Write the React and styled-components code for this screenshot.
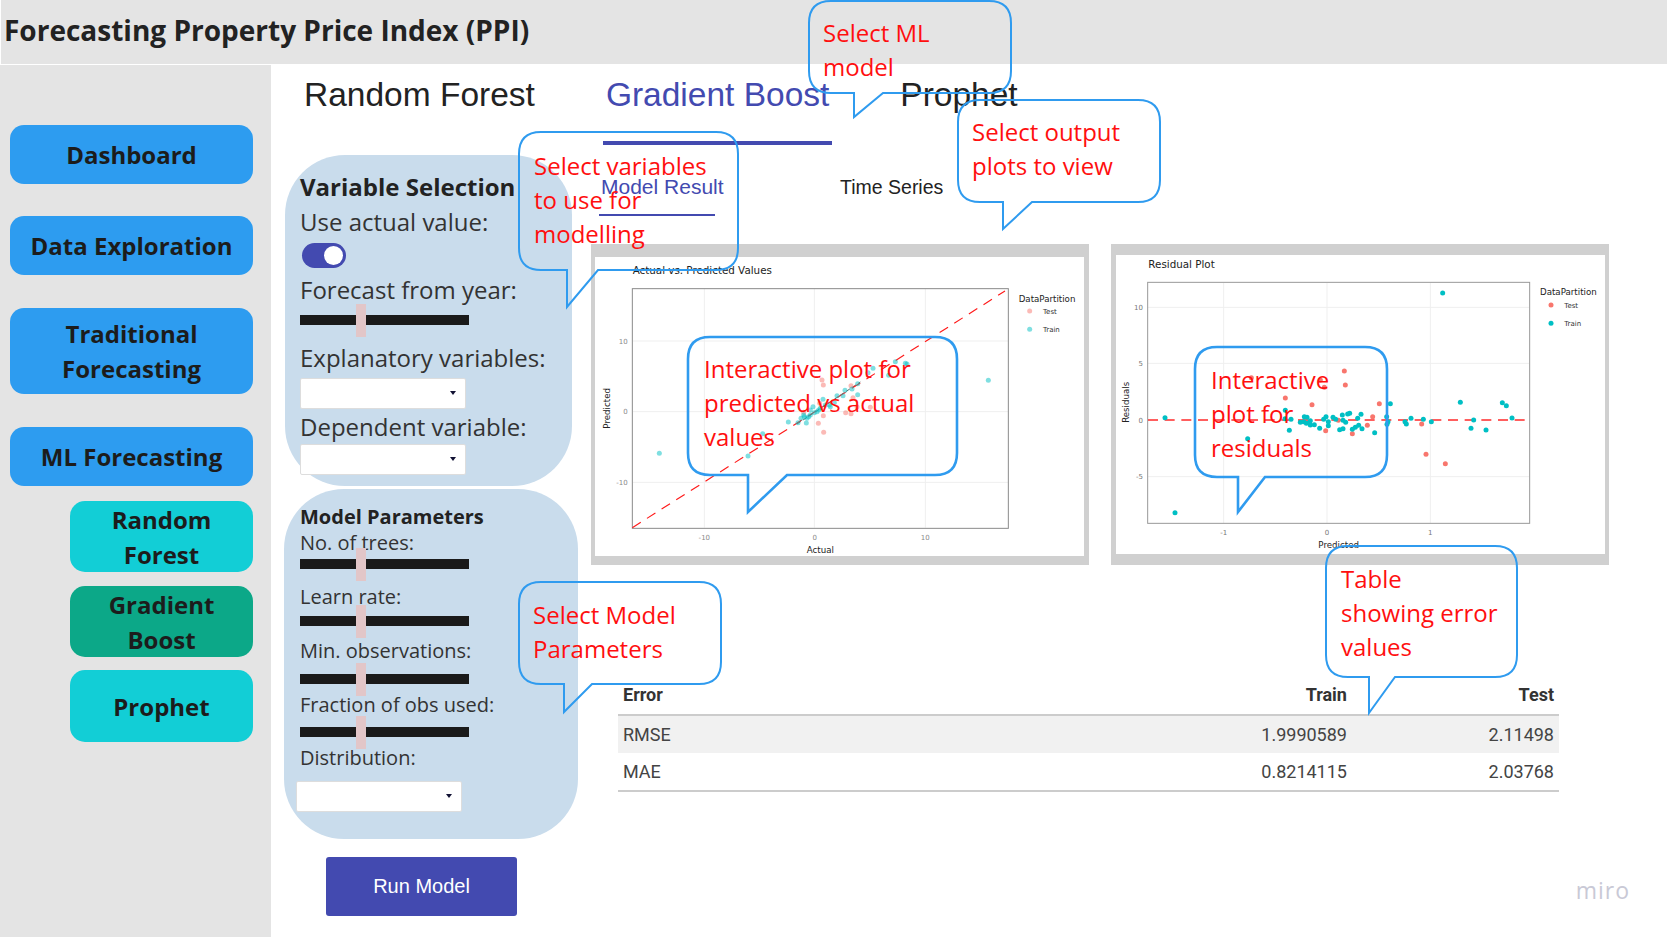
import React from "react";
import styled, { createGlobalStyle } from "styled-components";

const SANS = `"Open Sans", "Noto Sans", sans-serif`;
const ARIAL = `"Liberation Sans", Arial, sans-serif`;
const PLOT_FONT = `"DejaVu Sans", Verdana, sans-serif`;
const BLUE = "#434ab0";
const TEAL = "#00bfc4";
const SALMON = "#f8766d";

const bubbles = [
  { x: 809, y: 1, w: 202, h: 92, tailL: 45, tailR: 74, tipY: 116, textX: 14, textY: 15, lines: ["Select ML", "model"] },
  { x: 958, y: 100, w: 202, h: 102, tailL: 45, tailR: 74, tipY: 129, textX: 14, textY: 15, lines: ["Select output", "plots to view"] },
  { x: 519, y: 132, w: 219, h: 138, tailL: 48, tailR: 79, tipY: 175, textX: 15, textY: 17, lines: ["Select variables", "to use for", "modelling"] },
  { x: 519, y: 582, w: 202, h: 102, tailL: 45, tailR: 73, tipY: 130, textX: 14, textY: 16, lines: ["Select Model", "Parameters"] },
  { x: 688, y: 337, w: 269, h: 138, tailL: 60, tailR: 99, tipY: 175, textX: 16, textY: 15, thick: true, lines: ["Interactive plot for", "predicted vs actual", "values"] },
  { x: 1195, y: 347, w: 192, h: 130, tailL: 43, tailR: 70, tipY: 165, textX: 16, textY: 16, thick: true, lines: ["Interactive", "plot for", "residuals"] },
  { x: 1326, y: 546, w: 191, h: 131, tailL: 43, tailR: 69, tipY: 167, textX: 15, textY: 16, lines: ["Table", "showing error", "values"] },
];

const actualTrain = [
  [247, 670], [513, 678], [557, 611], [634, 576], [663, 578], [672, 565], [680, 555], [688, 579], [695, 560],
  [700, 540], [708, 530], [720, 545], [730, 535], [738, 508], [745, 525], [757, 525], [772, 518], [780, 497],
  [798, 497], [804, 481], [825, 477], [842, 461], [842, 494], [873, 428], [888, 415], [935, 436], [955, 395],
  [985, 400], [990, 402], [1234, 451], [682, 560], [690, 565], [700, 555], [712, 548], [725, 540], [760, 530],
];
const actualTest = [
  [740, 607], [724, 580], [739, 557], [680, 547], [806, 548], [822, 551], [840, 530], [880, 532], [828, 503],
  [822, 467], [739, 465], [735, 450], [728, 520],
];
const residualTrain = [
  [204, 563], [234, 848], [452, 626], [565, 541], [564, 566], [582, 568], [577, 601], [610, 577], [622, 560],
  [630, 562], [620, 575], [628, 580], [637, 578], [640, 585], [652, 584], [668, 595], [680, 568], [687, 560],
  [694, 575], [694, 587], [708, 562], [716, 568], [728, 599], [738, 596], [736, 555], [738, 571], [746, 577],
  [752, 552], [758, 550], [766, 598], [775, 592], [785, 586], [795, 596], [792, 553], [782, 565], [833, 608],
  [869, 560], [873, 575], [870, 583], [880, 521], [924, 575], [928, 582], [942, 565], [979, 568], [1003, 575],
  [1037, 189], [1090, 517], [1122, 595], [1130, 570], [1167, 600], [1216, 518], [1228, 527], [1245, 564], [640, 572],
];
const residualTest = [
  [742, 423], [670, 450], [682, 472], [745, 465], [565, 504], [645, 524], [463, 443], [847, 521], [827, 560],
  [811, 586], [766, 611], [686, 602], [724, 571], [974, 582], [987, 673], [1045, 701],
];

const bubblePath = ({ w, h, tailL, tailR, tipY }) => {
  const r = 22;
  return `M${r} 0H${w - r}Q${w} 0 ${w} ${r}V${h - r}Q${w} ${h} ${w - r} ${h}H${tailR}L${tailL} ${tipY}V${h}H${r}Q0 ${h} 0 ${h - r}V${r}Q0 0 ${r} 0Z`;
};

const Dots = ({ points, color, opacity }) =>
  points.map(([cx, cy]) => <circle key={`${cx}-${cy}`} cx={cx} cy={cy} r="7.5" fill={color} opacity={opacity} />);

const ActualPlot = () => (
  <PlotSvg width="489" height="299" viewBox="54 81 1467 897">
    <g stroke="#efefef" strokeWidth="3">
      <path d="M382 177V893M712 177V893M1045 177V893M167 333H1293M167 545H1293M167 757H1293" />
    </g>
    <rect x="166" y="176" width="1128" height="719" fill="none" stroke="#8a8a8a" strokeWidth="3" />
    <path d="M660 582L850 456" stroke="#666" strokeWidth="3" strokeDasharray="14 8" />
    <path d="M166 893L1284 183" stroke="#ff1a1a" strokeWidth="3.5" strokeDasharray="30 22" />
    <Dots points={actualTest} color={SALMON} opacity="0.5" />
    <Dots points={actualTrain} color={TEAL} opacity="0.5" />
    <g fill="#8a8a8a" fontSize="21" textAnchor="middle">
      <text x="382" y="931">-10</text>
      <text x="713" y="931">0</text>
      <text x="1045" y="931">10</text>
    </g>
    <g fill="#8a8a8a" fontSize="21" textAnchor="end">
      <text x="152" y="341">10</text>
      <text x="152" y="553">0</text>
      <text x="152" y="764">-10</text>
    </g>
    <text x="167" y="133" fontSize="31" fill="#222">Actual vs. Predicted Values</text>
    <text x="730" y="970" fontSize="26" fill="#222" textAnchor="middle">Actual</text>
    <text transform="translate(99 535) rotate(-90)" fontSize="26" fill="#222" textAnchor="middle">Predicted</text>
    <text x="1325" y="215" fontSize="26" fill="#222">DataPartition</text>
    <circle cx="1358" cy="243" r="7.5" fill={SALMON} opacity="0.5" />
    <text x="1398" y="251" fontSize="21" fill="#333">Test</text>
    <circle cx="1358" cy="298" r="7.5" fill={TEAL} opacity="0.5" />
    <text x="1398" y="306" fontSize="21" fill="#333">Train</text>
  </PlotSvg>
);

const ResidualPlot = () => (
  <PlotSvg width="489" height="299" viewBox="57 75 1467 897">
    <g stroke="#efefef" strokeWidth="3">
      <path d="M380 158V879M690 158V879M1000 158V879M153 232H1297M153 400H1297M153 740H1297" />
    </g>
    <rect x="152" y="157" width="1146" height="723" fill="none" stroke="#999" strokeWidth="3" />
    <path d="M153 570H1298" stroke="#ff2a2a" strokeWidth="4" strokeDasharray="30 20" />
    <Dots points={residualTest} color={SALMON} opacity="1" />
    <Dots points={residualTrain} color={TEAL} opacity="1" />
    <g fill="#777" fontSize="21" textAnchor="middle">
      <text x="380" y="916">-1</text>
      <text x="690" y="916">0</text>
      <text x="1000" y="916">1</text>
    </g>
    <g fill="#777" fontSize="21" textAnchor="end">
      <text x="138" y="239">10</text>
      <text x="138" y="408">5</text>
      <text x="138" y="578">0</text>
      <text x="138" y="748">-5</text>
    </g>
    <text x="154" y="113" fontSize="31" fill="#222">Residual Plot</text>
    <text x="725" y="955" fontSize="26" fill="#222" textAnchor="middle">Predicted</text>
    <text transform="translate(96 517) rotate(-90)" fontSize="26" fill="#222" textAnchor="middle">Residuals</text>
    <text x="1329" y="195" fontSize="26" fill="#222">DataPartition</text>
    <circle cx="1362" cy="225" r="7.5" fill={SALMON} />
    <text x="1402" y="233" fontSize="21" fill="#333">Test</text>
    <circle cx="1362" cy="280" r="7.5" fill={TEAL} />
    <text x="1402" y="288" fontSize="21" fill="#333">Train</text>
  </PlotSvg>
);

const Slider = ({ mt }) => (
  <SliderTrack $mt={mt}>
    <SliderThumb />
  </SliderTrack>
);

const Dropdown = ({ mt, ml }) => (
  <SelectBox $mt={mt} $ml={ml}>
    <Caret />
  </SelectBox>
);

const Callout = ({ bubble }) => (
  <CalloutWrap $x={bubble.x} $y={bubble.y} $w={bubble.w} $h={bubble.h}>
    <CalloutShape width={bubble.w} height={bubble.h}>
      <path d={bubblePath(bubble)} fill="none" stroke="#2f9bef" strokeWidth={bubble.thick ? 2.6 : 2} />
    </CalloutShape>
    <CalloutText $x={bubble.textX} $y={bubble.textY}>
      {bubble.lines.map((line) => (
        <div key={line}>{line}</div>
      ))}
    </CalloutText>
  </CalloutWrap>
);

export default function App() {
  return (
    <Page>
      <GlobalStyle />
      <Header>Forecasting Property Price Index (PPI)</Header>
      <Body>
        <Sidebar>
          <NavButton $h={59} $mt={60}>Dashboard</NavButton>
          <NavButton $h={59} $mt={32}>Data Exploration</NavButton>
          <NavButton $h={86} $mt={33}>Traditional<br />Forecasting</NavButton>
          <NavButton $h={59} $mt={33}>ML Forecasting</NavButton>
          <NavButton $sub $h={71} $mt={15}>Random<br />Forest</NavButton>
          <NavButton $sub $selected $h={71} $mt={14}>Gradient<br />Boost</NavButton>
          <NavButton $sub $h={72} $mt={13}>Prophet</NavButton>
        </Sidebar>

        <Main>
          <ModelTabs>
            <ModelTab>Random Forest</ModelTab>
            <ModelTab $active>Gradient Boost</ModelTab>
            <ModelTab>Prophet</ModelTab>
          </ModelTabs>

          <Columns>
            <Controls>
              <VariablePanel>
                <PanelHeading>Variable Selection</PanelHeading>
                <BigLabel $mt={4}>Use actual value:</BigLabel>
                <Toggle><ToggleKnob /></Toggle>
                <BigLabel $mt={7}>Forecast from year:</BigLabel>
                <Slider mt={10} />
                <BigLabel $mt={18}>Explanatory variables:</BigLabel>
                <Dropdown mt={5} />
                <BigLabel $mt={3}>Dependent variable:</BigLabel>
                <Dropdown mt={2} />
              </VariablePanel>

              <ParameterPanel>
                <SmallHeading>Model Parameters</SmallHeading>
                <SmallLabel $mt={-1}>No. of trees:</SmallLabel>
                <Slider mt={3} />
                <SmallLabel $mt={15}>Learn rate:</SmallLabel>
                <Slider mt={6} />
                <SmallLabel $mt={12}>Min. observations:</SmallLabel>
                <Slider mt={10} />
                <SmallLabel $mt={8}>Fraction of obs used:</SmallLabel>
                <Slider mt={9} />
                <SmallLabel $mt={8}>Distribution:</SmallLabel>
                <Dropdown mt={10} ml={-4} />
              </ParameterPanel>

              <RunButton>Run Model</RunButton>
            </Controls>

            <Results>
              <OutputTabs>
                <OutputTab $active>Model Result</OutputTab>
                <OutputTab>Time Series</OutputTab>
              </OutputTabs>

              <Plots>
                <PlotFrame $pad="13px 5px 9px 4px"><ActualPlot /></PlotFrame>
                <PlotFrame $pad="11px 4px 11px 5px"><ResidualPlot /></PlotFrame>
              </Plots>

              <ErrorTable>
                <thead>
                  <tr>
                    <HeadCell>Error</HeadCell>
                    <HeadCell $right>Train</HeadCell>
                    <HeadCell $right>Test</HeadCell>
                  </tr>
                </thead>
                <tbody>
                  <ShadedRow>
                    <Cell>RMSE</Cell>
                    <Cell $right>1.9990589</Cell>
                    <Cell $right>2.11498</Cell>
                  </ShadedRow>
                  <tr>
                    <Cell $last>MAE</Cell>
                    <Cell $last $right>0.8214115</Cell>
                    <Cell $last $right>2.03768</Cell>
                  </tr>
                </tbody>
              </ErrorTable>
            </Results>
          </Columns>
        </Main>
      </Body>

      {bubbles.map((bubble) => (
        <Callout key={bubble.x} bubble={bubble} />
      ))}
      <Watermark>miro</Watermark>
    </Page>
  );
}

const GlobalStyle = createGlobalStyle`
  html, body {
    margin: 0;
    padding: 0;
    background: #fff;
  }
`;

const Page = styled.div`
  position: relative;
  width: 1667px;
  height: 937px;
  overflow: hidden;
  font-family: ${SANS};
  color: #222;
`;

const Header = styled.header`
  height: 60px;
  margin-left: 1px;
  padding: 0 0 4px 3px;
  display: flex;
  align-items: center;
  background: #e4e4e4;
  font-size: 28px;
  font-weight: 700;
  color: #222;
`;

const Body = styled.div`
  display: flex;
  height: 872px;
  margin-top: 1px;
`;

const Sidebar = styled.nav`
  flex: 0 0 271px;
  box-sizing: border-box;
  padding-left: 10px;
  background: #e4e4e4;
`;

const NavButton = styled.div`
  display: flex;
  align-items: center;
  justify-content: center;
  box-sizing: border-box;
  width: ${(p) => (p.$sub ? 183 : 243)}px;
  height: ${(p) => p.$h}px;
  margin-top: ${(p) => p.$mt}px;
  margin-left: ${(p) => (p.$sub ? 60 : 0)}px;
  border-radius: ${(p) => (p.$sub ? 15 : 14)}px;
  background: ${(p) => (p.$selected ? "#0ca888" : p.$sub ? "#12ced6" : "#2d9cf0")};
  font-size: 24px;
  font-weight: 700;
  line-height: 35px;
  text-align: center;
  color: #1c1c1c;
`;

const Main = styled.main`
  flex: 1;
  min-width: 0;
`;

const ModelTabs = styled.div`
  display: flex;
  gap: 65px;
  padding-left: 30px;
`;

const ModelTab = styled.div`
  box-sizing: border-box;
  height: 80px;
  padding: 10px 3px 0;
  border-bottom: 4px solid ${(p) => (p.$active ? BLUE : "transparent")};
  font-family: ${ARIAL};
  font-size: 33.5px;
  line-height: 40px;
  color: ${(p) => (p.$active ? BLUE : "#222")};
`;

const Columns = styled.div`
  display: flex;
`;

const Controls = styled.section`
  flex: 0 0 320px;
  box-sizing: border-box;
  padding: 10px 0 0 14px;
`;

const VariablePanel = styled.div`
  box-sizing: border-box;
  width: 287px;
  height: 331px;
  padding: 16px 0 0 15px;
  border-radius: 60px;
  background: #c9dcec;
`;

const ParameterPanel = styled.div`
  box-sizing: border-box;
  width: 294px;
  height: 350px;
  margin: 3px 0 0 -1px;
  padding: 14px 0 0 16px;
  border-radius: 60px;
  background: #c9dcec;
`;

const PanelHeading = styled.div`
  font-size: 24px;
  font-weight: 700;
  line-height: 32px;
  white-space: nowrap;
`;

const SmallHeading = styled.div`
  font-size: 20px;
  font-weight: 700;
  line-height: 28px;
  white-space: nowrap;
`;

const BigLabel = styled.div`
  margin-top: ${(p) => p.$mt}px;
  font-size: 24px;
  line-height: 30px;
  color: #333;
  white-space: nowrap;
`;

const SmallLabel = styled.div`
  margin-top: ${(p) => p.$mt}px;
  font-size: 20px;
  line-height: 26px;
  color: #333;
  white-space: nowrap;
`;

const Toggle = styled.div`
  display: flex;
  justify-content: flex-end;
  align-items: center;
  box-sizing: border-box;
  width: 44px;
  height: 25px;
  margin: 6px 0 0 2px;
  padding-right: 3px;
  border-radius: 13px;
  background: ${BLUE};
`;

const ToggleKnob = styled.span`
  width: 19px;
  height: 19px;
  border-radius: 50%;
  background: #fff;
`;

const SliderTrack = styled.div`
  position: relative;
  width: 169px;
  height: 10px;
  margin-top: ${(p) => p.$mt}px;
  background: #1a1a1a;
`;

const SliderThumb = styled.span`
  position: absolute;
  left: 56px;
  top: -11px;
  width: 10px;
  height: 33px;
  background: #e2c6c8;
`;

const SelectBox = styled.div`
  position: relative;
  box-sizing: border-box;
  width: 166px;
  height: 31px;
  margin-top: ${(p) => p.$mt}px;
  margin-left: ${(p) => p.$ml || 0}px;
  border: 1px solid #ddd;
  border-radius: 2px;
  background: #fff;
`;

const Caret = styled.span`
  position: absolute;
  right: 9px;
  top: 12px;
  border-top: 4px solid #111133;
  border-left: 3.5px solid transparent;
  border-right: 3.5px solid transparent;
`;

const RunButton = styled.div`
  display: flex;
  align-items: center;
  justify-content: center;
  width: 191px;
  height: 59px;
  margin: 18px 0 0 41px;
  border-radius: 3px;
  background: ${BLUE};
  font-family: ${ARIAL};
  font-size: 20px;
  color: #fff;
`;

const Results = styled.section`
  flex: 1;
  min-width: 0;
`;

const OutputTabs = styled.div`
  display: flex;
  height: 71px;
  margin-left: 8px;
`;

const OutputTab = styled.div`
  box-sizing: border-box;
  width: ${(p) => (p.$active ? "116px" : "auto")};
  height: 71px;
  margin-left: ${(p) => (p.$active ? 0 : 123)}px;
  padding: 30px 0 0 2px;
  border-bottom: 2px solid ${(p) => (p.$active ? BLUE : "transparent")};
  font-family: ${ARIAL};
  font-size: ${(p) => (p.$active ? 21 : 19.5)}px;
  line-height: 24px;
  white-space: nowrap;
  color: ${(p) => (p.$active ? BLUE : "#222")};
`;

const Plots = styled.div`
  display: flex;
  gap: 22px;
  margin-top: 28px;
`;

const PlotFrame = styled.div`
  box-sizing: border-box;
  width: 498px;
  height: 321px;
  padding: ${(p) => p.$pad};
  background: #d0d0d0;
`;

const PlotSvg = styled.svg`
  display: block;
  background: #fff;
  font-family: ${PLOT_FONT};
`;

const ErrorTable = styled.table`
  width: 941px;
  margin: 99px 0 0 27px;
  border-collapse: collapse;
  font-family: Roboto, sans-serif;
  font-size: 18px;
  color: #444;
`;

const HeadCell = styled.th`
  height: 51px;
  box-sizing: border-box;
  padding: 0 5px 7px;
  border-bottom: 2px solid #ccc;
  font-weight: 700;
  line-height: 24px;
  vertical-align: bottom;
  text-align: ${(p) => (p.$right ? "right" : "left")};
  color: #333;
  &:first-child {
    width: 50%;
  }
  &:nth-child(2) {
    width: 28%;
  }
`;

const ShadedRow = styled.tr`
  background: #f1f1f1;
`;

const Cell = styled.td`
  height: 38px;
  box-sizing: border-box;
  padding: 0 5px;
  border-bottom: ${(p) => (p.$last ? "2px solid #ccc" : "none")};
  text-align: ${(p) => (p.$right ? "right" : "left")};
`;

const CalloutWrap = styled.div`
  position: absolute;
  left: ${(p) => p.$x}px;
  top: ${(p) => p.$y}px;
  width: ${(p) => p.$w}px;
  height: ${(p) => p.$h}px;
`;

const CalloutShape = styled.svg`
  position: absolute;
  inset: 0;
  overflow: visible;
`;

const CalloutText = styled.div`
  position: absolute;
  left: ${(p) => p.$x}px;
  top: ${(p) => p.$y}px;
  font-size: 24px;
  line-height: 34px;
  color: #ff0f0f;
  white-space: nowrap;
`;

const Watermark = styled.div`
  position: absolute;
  right: 37px;
  top: 874px;
  font-size: 23px;
  line-height: 32px;
  letter-spacing: 1px;
  color: #c9c9d6;
`;
